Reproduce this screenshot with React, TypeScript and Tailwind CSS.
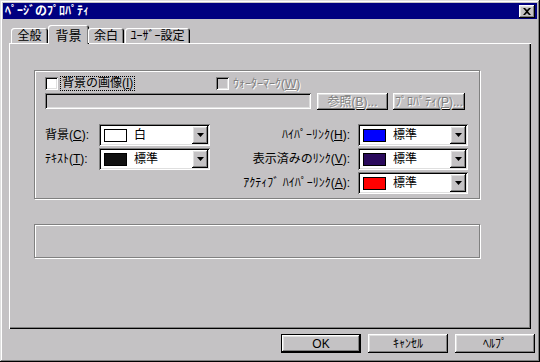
import React from "react";

const raised =
  "shadow-[inset_-1px_-1px_0_#000,inset_1px_1px_0_#fff,inset_-2px_-2px_0_#808080,inset_2px_2px_0_#dfdfdf]";
const sunken =
  "shadow-[inset_1px_1px_0_#808080,inset_-1px_-1px_0_#fff,inset_2px_2px_0_#000,inset_-2px_-2px_0_#dfdfdf]";
const disabledText = "text-[#808080] [text-shadow:1px_1px_0_#fff]";

type Tab = { label: React.ReactNode; width: string; active?: boolean };

const tabs: Tab[] = [
  { label: "全般", width: "w-[37px]" },
  { label: "背景", width: "w-[41px]", active: true },
  { label: "余白", width: "w-[36px]" },
  { label: "ﾕｰｻﾞｰ設定", width: "w-[65px]" },
];

const Checkbox = ({ disabled }: { disabled?: boolean }) => (
  <div
    className={`w-[13px] h-[13px] shrink-0 ${sunken} ${
      disabled ? "bg-[#c4c2c4]" : "bg-white"
    }`}
  />
);

const ColorCombo = ({ color, text }: { color: string; text: string }) => (
  <div className={`h-[22px] bg-white flex items-center relative ${sunken}`}>
    <div
      className="ml-[5px] w-[23px] h-[13px] border border-black"
      style={{ backgroundColor: color }}
    />
    <span className="ml-[7px] text-black">{text}</span>
    <div
      className={`absolute right-[2px] top-[2px] w-[16px] h-[18px] bg-[#c4c2c4] flex items-center justify-center ${raised}`}
    >
      <svg width="7" height="4" viewBox="0 0 7 4">
        <path d="M0 0h7L3.5 4z" fill="#000" />
      </svg>
    </div>
  </div>
);

const Label = ({ text, k, tail = ":" }: { text: string; k: string; tail?: string }) => (
  <span className="whitespace-nowrap">
    {text}(<u>{k}</u>){tail}
  </span>
);

export default function App() {
  return (
    <div className="w-[540px] h-[362px] bg-[#c4c2c4] p-[3px] flex flex-col font-['Liberation_Sans','Noto_Sans_CJK_JP',sans-serif] text-[12px] leading-[14px] text-black shadow-[inset_-1px_-1px_0_#000,inset_1px_1px_0_#dfdfdf,inset_-2px_-2px_0_#808080,inset_2px_2px_0_#fff] overflow-hidden">
      {/* Title bar */}
      <div className="h-[16px] bg-[#000080] flex items-center justify-between pl-[2px] pr-[2px]">
        <span className="text-white font-bold text-[12px] leading-[14px]">
          ﾍﾟｰｼﾞのﾌﾟﾛﾊﾟﾃｨ
        </span>
        <div
          className={`w-[16px] h-[13px] bg-[#c4c2c4] flex items-center justify-center ${raised}`}
        >
          <svg width="8" height="7" viewBox="0 0 8 7">
            <path
              d="M0 0h2l2 2 2-2h2L5 3.5 8 7H6L4 5 2 7H0l3-3.5z"
              fill="#000"
            />
          </svg>
        </div>
      </div>

      {/* Tabs */}
      <div className="mt-[6px] h-[18px] flex items-end pl-[8px] relative z-10">
        {tabs.map((t, i) => (
          <div
            key={i}
            className={`${t.width} ${
              t.active ? "h-[19px] -mb-[1px] -mx-[1px] pt-[2px]" : "h-[15px] mr-[1px]"
            } bg-[#c4c2c4] rounded-t-[3px] flex items-center justify-center shadow-[inset_1px_1px_0_#fff,inset_-1px_0_0_#000,inset_-2px_0_0_#808080] ${
              t.active ? "text-[13px]" : ""
            }`}
          >
            {t.label}
          </div>
        ))}
      </div>

      {/* Tab panel */}
      <div className="ml-[6px] w-[522px] h-[286px] pt-[27px] pl-[25px] shadow-[inset_1px_1px_0_#fff,inset_-1px_-1px_0_#000,inset_-2px_-2px_0_#808080]">
        <div className="w-[446px] h-[129px] border border-[#808080] shadow-[inset_1px_1px_0_#fff,1px_1px_0_#fff] pl-[10px] pt-[5px]">
          {/* image row */}
          <div className="flex items-center h-[15px]">
            <div className="w-[171px] flex items-center">
              <Checkbox />
              <span className="ml-[2px] px-[1px] border border-dotted border-black leading-[13px]">
                背景の画像(<u>I</u>)
              </span>
            </div>
            <Checkbox disabled />
            <span className={`ml-[4px] ${disabledText}`}>
              ｳｫｰﾀｰﾏｰｸ(<u>W</u>)
            </span>
          </div>
          <div className="flex items-start mt-[2px]">
            <div className={`w-[266px] h-[16px] ${sunken}`} />
            <div
              className={`ml-[6px] w-[71px] h-[17px] flex items-center justify-center ${raised} ${disabledText}`}
            >
              参照(<u>B</u>)...
            </div>
            <div
              className={`ml-[5px] w-[72px] h-[17px] flex items-center justify-center ${raised} ${disabledText}`}
            >
              ﾌﾟﾛﾊﾟﾃｨ(<u>P</u>)...
            </div>
          </div>

          {/* colour rows */}
          <div className="mt-[14px] grid grid-cols-[54px_111px_148px_110px] auto-rows-[22px] gap-y-[2px] items-center">
            <Label text="背景" k="C" />
            <ColorCombo color="#ffffff" text="白" />
            <div className="text-right pr-[8px]">
              <Label text="ﾊｲﾊﾟｰﾘﾝｸ" k="H" />
            </div>
            <ColorCombo color="#0000ff" text="標準" />

            <Label text="ﾃｷｽﾄ" k="T" />
            <ColorCombo color="#101010" text="標準" />
            <div className="text-right pr-[8px]">
              <Label text="表示済みのﾘﾝｸ" k="V" />
            </div>
            <ColorCombo color="#2a0a5c" text="標準" />

            <div />
            <div />
            <div className="text-right pr-[8px]">
              <Label text="ｱｸﾃｨﾌﾞ ﾊｲﾊﾟｰﾘﾝｸ" k="A" />
            </div>
            <ColorCombo color="#ff0000" text="標準" />
          </div>
        </div>

        <div className="mt-[25px] w-[446px] h-[34px] border border-[#808080] shadow-[inset_1px_1px_0_#fff,1px_1px_0_#fff]" />
      </div>

      {/* Bottom buttons */}
      <div className="mt-[5px] flex justify-end gap-[7px] pr-[2px]">
        <div
          className={`w-[80px] h-[19px] flex items-center justify-center border border-black ${raised}`}
        >
          OK
        </div>
        <div className={`w-[80px] h-[19px] flex items-center justify-center ${raised}`}>
          ｷｬﾝｾﾙ
        </div>
        <div className={`w-[80px] h-[19px] flex items-center justify-center ${raised}`}>
          ﾍﾙﾌﾟ
        </div>
      </div>
    </div>
  );
}
